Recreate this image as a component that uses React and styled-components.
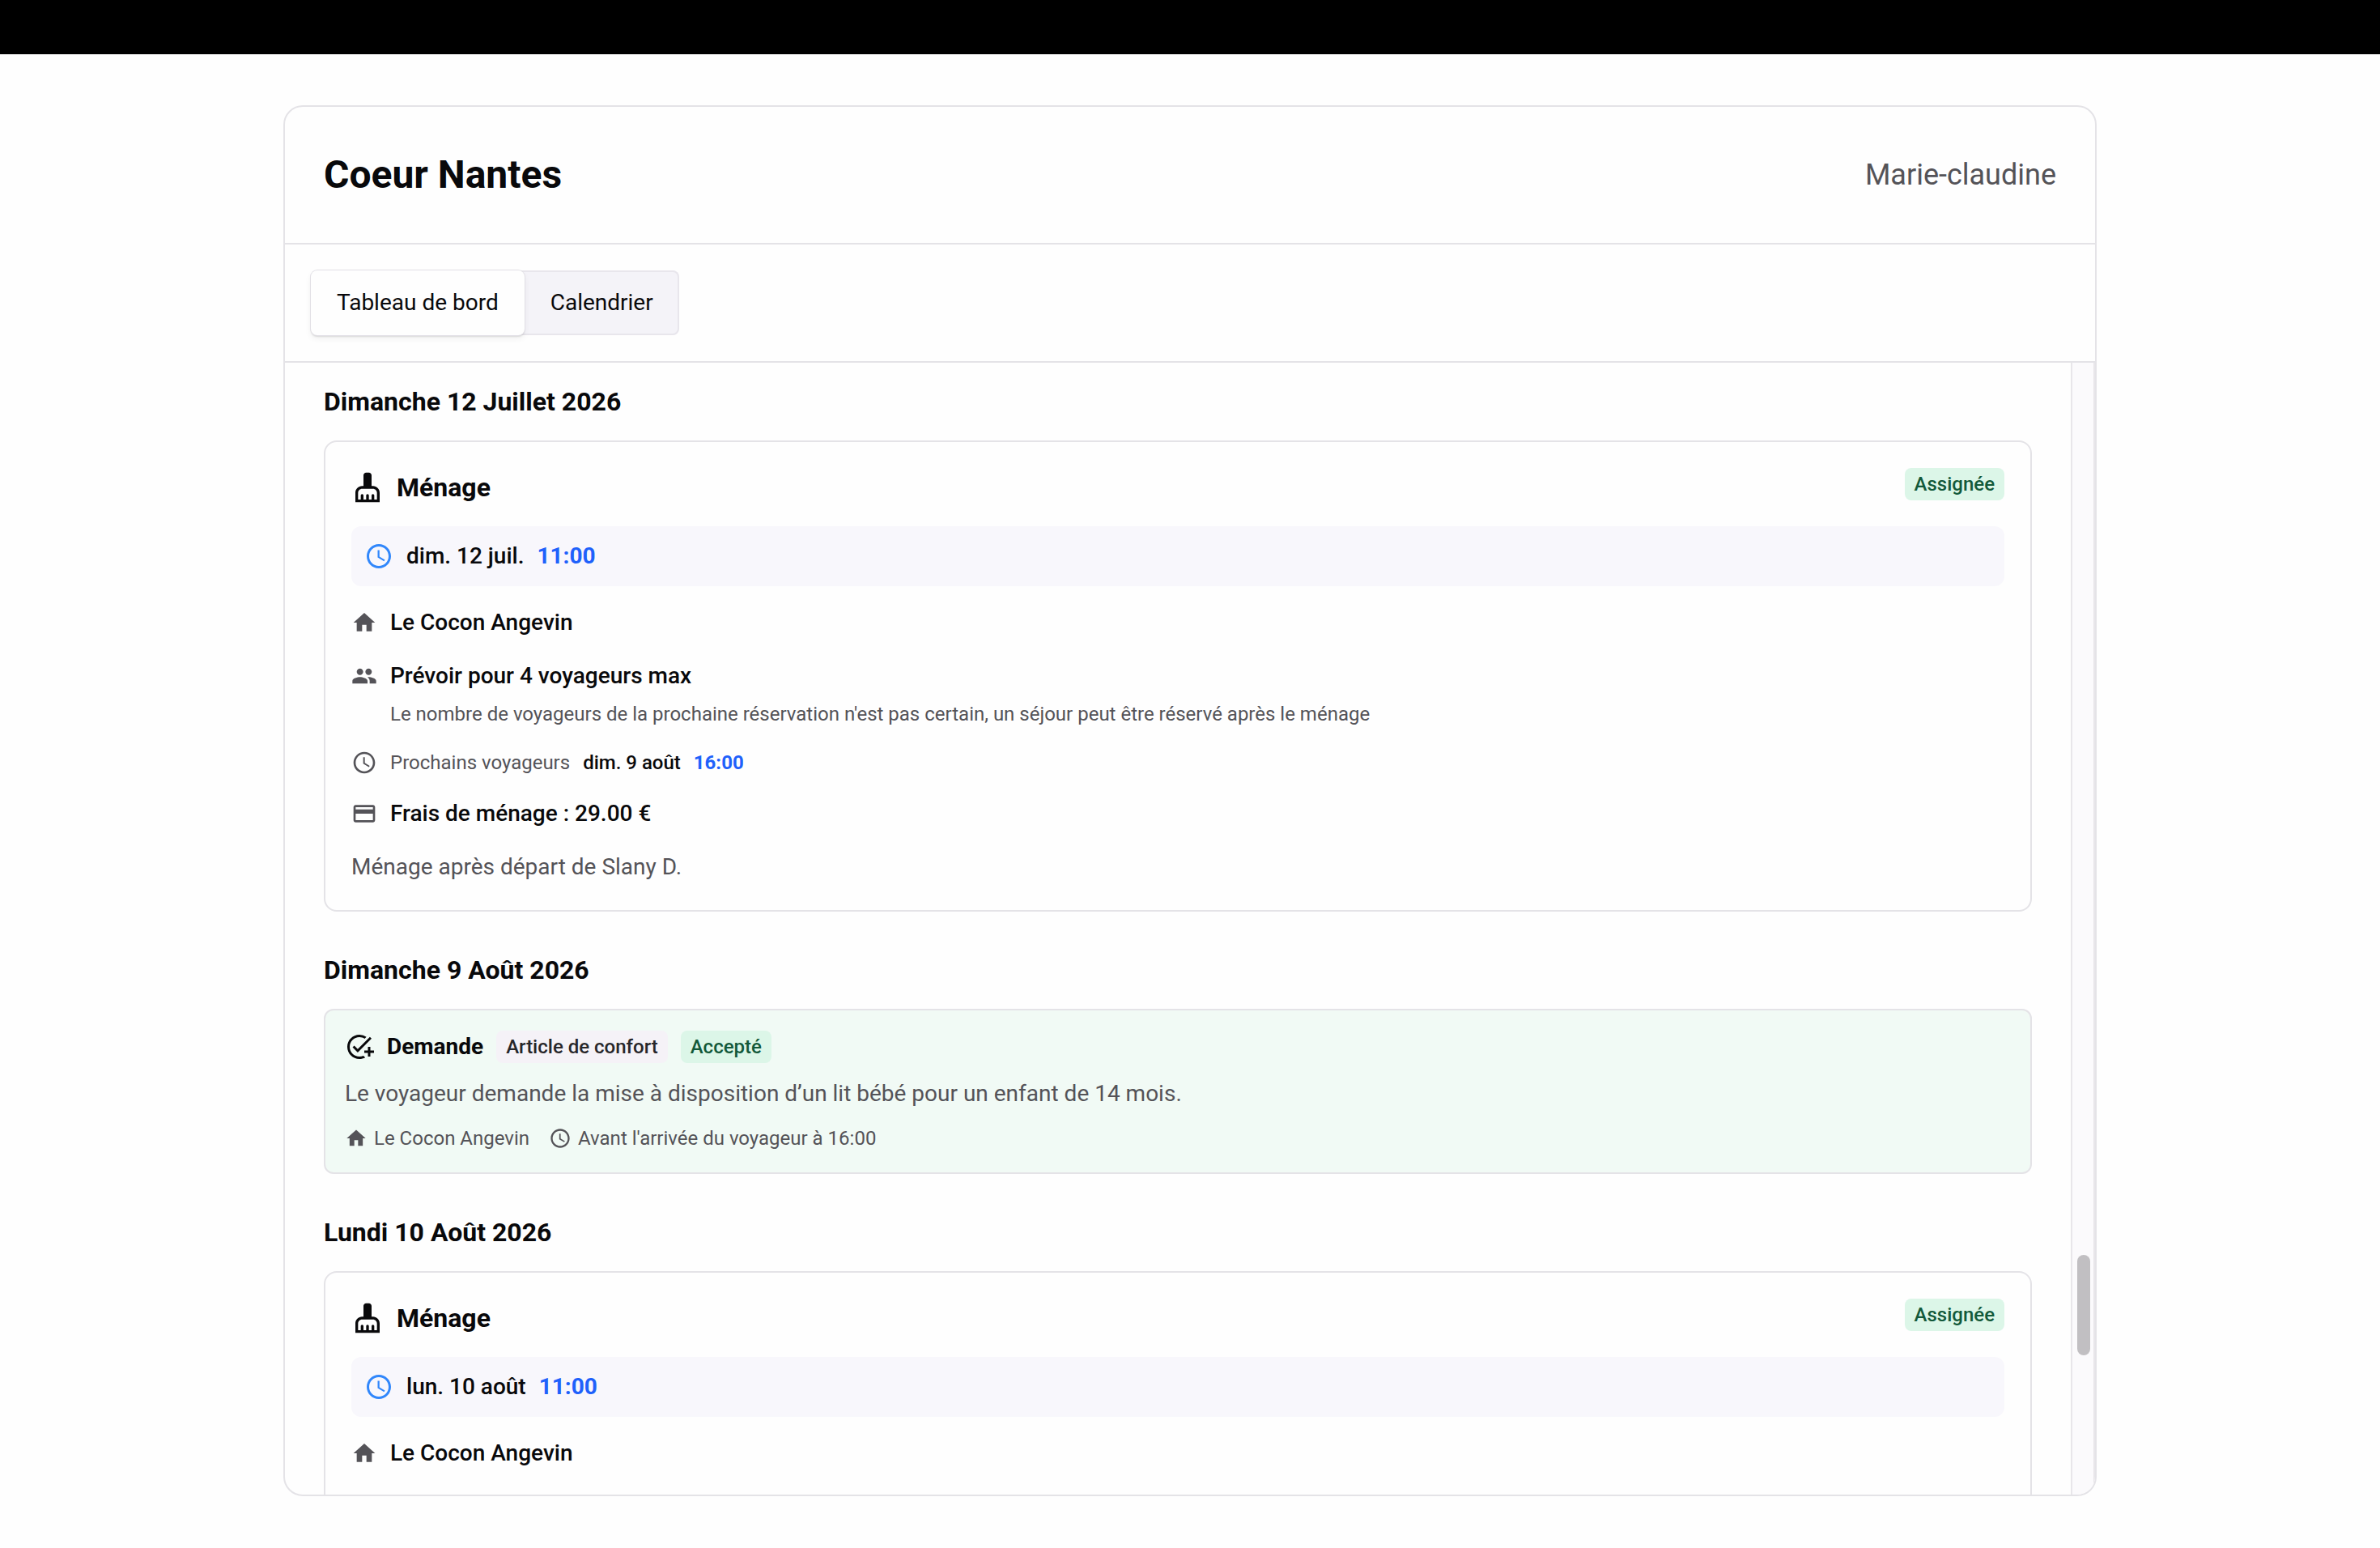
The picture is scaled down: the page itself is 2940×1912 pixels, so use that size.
import React from "react";
import styled, { createGlobalStyle } from "styled-components";
import {
  MdCleaningServices,
  MdAccessTime,
  MdHome,
  MdPeople,
  MdPayment,
  MdAddTask,
} from "react-icons/md";

const color = {
  ink: "#09090b",
  muted: "#545358",
  line: "#e4e3e7",
  soft: "#f4f3f8",
  blue: "#1f61fb",
  blueIcon: "#3187fb",
  greenBg: "#dcf6e8",
  greenText: "#12593a",
};

const GlobalStyle = createGlobalStyle`
  *, *::before, *::after { box-sizing: border-box; }
  body {
    margin: 0;
    background: #fefefe;
    color: ${color.ink};
    font-family: Roboto, "Liberation Sans", sans-serif;
    font-size: 28px;
    line-height: 42px;
    -webkit-font-smoothing: antialiased;
  }
  h1, h2, h3, p { margin: 0; }
  svg { display: block; flex: none; }
`;

const Page = styled.div`
  display: flex;
  flex-direction: column;
  height: 100vh;
`;

const TopBar = styled.div`
  flex: none;
  height: 67px;
  background: #000;
`;

const Main = styled.main`
  flex: 1;
  min-height: 0;
  display: flex;
  justify-content: center;
  padding: 63px 64px 64px;
`;

const Panel = styled.div`
  flex: 1;
  max-width: 2240px;
  min-width: 0;
  display: flex;
  flex-direction: column;
  border: 2px solid ${color.line};
  border-radius: 24px;
  overflow: hidden;
`;

const PanelHeader = styled.header`
  display: flex;
  align-items: center;
  justify-content: space-between;
  padding: 48px;
  border-bottom: 2px solid ${color.line};
`;

const Title = styled.h1`
  font-size: 48px;
  line-height: 72px;
  font-weight: 700;
`;

const UserName = styled.span`
  font-size: 36px;
  line-height: 54px;
  color: ${color.muted};
`;

const TabBar = styled.nav`
  padding: 32px;
  border-bottom: 2px solid ${color.line};
`;

const TabList = styled.div`
  display: inline-flex;
  vertical-align: top;
  border-radius: 8px;
  background: ${color.soft};
  box-shadow: inset 0 0 0 2px #e8e6ec;
`;

const Tab = styled.button`
  height: 80px;
  padding: 0 32px;
  border: 0;
  border-radius: 8px;
  background: ${(p) => (p.$active ? "#fefefe" : "transparent")};
  box-shadow: ${(p) =>
    p.$active
      ? "0 0 0 1px #e2e0e6, 0 2px 2px rgba(0,0,0,.12), 0 4px 8px rgba(0,0,0,.06)"
      : "none"};
  color: ${color.ink};
  font: inherit;
`;

const Body = styled.div`
  flex: 1;
  min-height: 0;
  display: flex;
`;

const Feed = styled.div`
  flex: 1;
  min-width: 0;
  overflow: hidden;
  display: flex;
  flex-direction: column;
  gap: 48px;
  padding: 24px 48px 0;
`;

const Track = styled.div`
  flex: none;
  width: 30px;
  display: grid;
  grid-template-rows: 1102fr 124fr 172fr;
  justify-items: center;
  padding-left: 2px;
  background: #fbfafc;
  border: solid #e8e6ea;
  border-width: 0 2px;
`;

const Thumb = styled.div`
  grid-row: 2;
  width: 16px;
  border-radius: 8px;
  background: #c1bfc2;
`;

const Day = styled.section`
  flex: none;
  display: flex;
  flex-direction: column;
  gap: 24px;
`;

const DayTitle = styled.h2`
  font-size: 32px;
  line-height: 48px;
  font-weight: 700;
`;

const Card = styled.article`
  display: flex;
  flex-direction: column;
  gap: 24px;
  padding: ${(p) => (p.$more ? "32px 32px 64px" : "32px")};
  border: 2px solid ${color.line};
  border-radius: 16px;
`;

const RequestCard = styled(Card)`
  gap: 16px;
  padding: 24px;
  border-radius: 12px;
  background: #f1faf5;
`;

const CardHeader = styled.div`
  display: flex;
  align-items: flex-start;
  justify-content: space-between;
`;

const CardTitle = styled.h3`
  display: flex;
  align-items: center;
  gap: 16px;
  font-size: 32px;
  line-height: 48px;
  font-weight: 700;
`;

const Badge = styled.span`
  padding: 4px 12px;
  border-radius: 8px;
  font-size: 24px;
  line-height: 32px;
  font-weight: 500;
  background: ${(p) => (p.$neutral ? "#f5f2f7" : color.greenBg)};
  color: ${(p) => (p.$neutral ? "#27272a" : color.greenText)};
`;

const Schedule = styled.div`
  display: flex;
  align-items: center;
  gap: 16px;
  padding: 16px;
  border-radius: 12px;
  background: #f8f7fc;
  font-weight: 500;

  svg { color: ${color.blueIcon}; }
`;

const Hour = styled.time`
  font-weight: 700;
  color: ${color.blue};
`;

const Row = styled.div`
  display: grid;
  grid-template-columns: 32px 1fr;
  align-items: center;
  gap: 8px 16px;
  font-weight: 500;

  svg { color: ${color.muted}; }
`;

const Note = styled.p`
  grid-column: 2;
  font-size: 24px;
  line-height: 36px;
  font-weight: 400;
  color: ${color.muted};
`;

const NextGuests = styled.div`
  display: flex;
  gap: 16px;
  font-size: 24px;
  line-height: 36px;
`;

const Muted = styled.span`
  font-weight: 400;
  color: ${color.muted};
`;

const Text = styled.p`
  color: ${color.muted};
`;

const RequestHead = styled.div`
  display: flex;
  align-items: center;
  gap: 16px;
`;

const RequestTitle = styled.h3`
  font-size: 28px;
  line-height: 42px;
  font-weight: 700;
`;

const Meta = styled.div`
  display: flex;
  gap: 24px;
  font-size: 24px;
  line-height: 36px;
  color: ${color.muted};
`;

const MetaItem = styled.span`
  display: flex;
  align-items: center;
  gap: 8px;
`;

function CleaningCard({ date, hour, place, more, children }) {
  return (
    <Card $more={more}>
      <CardHeader>
        <CardTitle>
          <MdCleaningServices size={40} />
          Ménage
        </CardTitle>
        <Badge>Assignée</Badge>
      </CardHeader>
      <Schedule>
        <MdAccessTime size={36} />
        <span>{date}</span>
        <Hour>{hour}</Hour>
      </Schedule>
      <Row>
        <MdHome size={32} />
        <span>{place}</span>
      </Row>
      {children}
    </Card>
  );
}

export default function App() {
  return (
    <Page>
      <GlobalStyle />
      <TopBar />
      <Main>
        <Panel>
          <PanelHeader>
            <Title>Coeur Nantes</Title>
            <UserName>Marie-claudine</UserName>
          </PanelHeader>
          <TabBar>
            <TabList role="tablist">
              <Tab type="button" role="tab" aria-selected="true" $active>
                Tableau de bord
              </Tab>
              <Tab type="button" role="tab" aria-selected="false">
                Calendrier
              </Tab>
            </TabList>
          </TabBar>
          <Body>
            <Feed>
              <Day>
                <DayTitle>Dimanche 12 Juillet 2026</DayTitle>
                <CleaningCard date="dim. 12 juil." hour="11:00" place="Le Cocon Angevin">
                  <Row>
                    <MdPeople size={32} />
                    <span>Prévoir pour 4 voyageurs max</span>
                    <Note>
                      Le nombre de voyageurs de la prochaine réservation n'est pas certain, un
                      séjour peut être réservé après le ménage
                    </Note>
                  </Row>
                  <Row>
                    <MdAccessTime size={32} />
                    <NextGuests>
                      <Muted>Prochains voyageurs</Muted>
                      <span>dim. 9 août</span>
                      <Hour>16:00</Hour>
                    </NextGuests>
                  </Row>
                  <Row>
                    <MdPayment size={32} />
                    <span>Frais de ménage : 29.00 €</span>
                  </Row>
                  <Text>Ménage après départ de Slany D.</Text>
                </CleaningCard>
              </Day>
              <Day>
                <DayTitle>Dimanche 9 Août 2026</DayTitle>
                <RequestCard>
                  <RequestHead>
                    <MdAddTask size={36} />
                    <RequestTitle>Demande</RequestTitle>
                    <Badge $neutral>Article de confort</Badge>
                    <Badge>Accepté</Badge>
                  </RequestHead>
                  <Text>
                    Le voyageur demande la mise à disposition d’un lit bébé pour un enfant de 14
                    mois.
                  </Text>
                  <Meta>
                    <MetaItem>
                      <MdHome size={28} />
                      Le Cocon Angevin
                    </MetaItem>
                    <MetaItem>
                      <MdAccessTime size={28} />
                      Avant l'arrivée du voyageur à 16:00
                    </MetaItem>
                  </Meta>
                </RequestCard>
              </Day>
              <Day>
                <DayTitle>Lundi 10 Août 2026</DayTitle>
                <CleaningCard date="lun. 10 août" hour="11:00" place="Le Cocon Angevin" more />
              </Day>
            </Feed>
            <Track>
              <Thumb />
            </Track>
          </Body>
        </Panel>
      </Main>
    </Page>
  );
}
